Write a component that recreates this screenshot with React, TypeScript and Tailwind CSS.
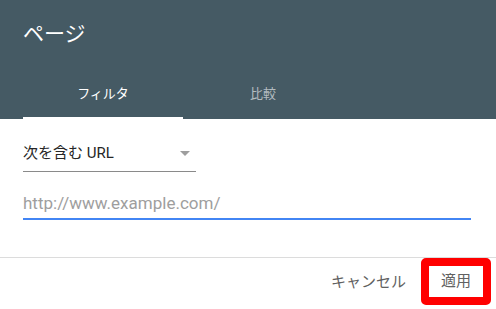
import React from "react";

export default function App() {
  const font = { fontFamily: 'Roboto, "Noto Sans CJK JP", sans-serif' };
  return (
    <div className="w-[496px] h-[309px] bg-white overflow-hidden" style={font}>
      <div className="bg-[#455a64] h-[119px] flex flex-col justify-between">
        <div className="pl-[23px] pt-[22px] text-[21px] leading-[25px] text-white">ページ</div>
        <div className="ml-[23px] flex">
          <div className="w-[160px] h-[48px] flex flex-col">
            <div className="flex-1 flex items-center justify-center text-[13px] text-white">フィルタ</div>
            <div className="h-[2px] bg-white" />
          </div>
          <div className="w-[160px] h-[48px] flex flex-col">
            <div className="flex-1 flex items-center justify-center text-[13px] text-white/60">比較</div>
            <div className="h-[2px]" />
          </div>
        </div>
      </div>
      <div className="pl-[23px]">
        <div className="mt-[16px] w-[173px] h-[37px] border-b border-[#8a8a8a] flex items-center justify-between pr-[6px]">
          <span className="text-[15px] text-[#262626]">次を含む URL</span>
          <svg width="10" height="5" viewBox="0 0 10 5" className="mt-[1px]">
            <path d="M0 0 L10 0 L5 5 Z" fill="#9e9e9e" />
          </svg>
        </div>
        <div className="mt-[18px] w-[448px] h-[30px] border-b-2 border-[#4285f4] flex items-center">
          <input
            className="w-full outline-none text-[17px] text-[#212121] placeholder:text-[#9e9e9e] bg-transparent"
            style={font}
            placeholder="http://www.example.com/"
          />
        </div>
      </div>
      <div className="mt-[37px] border-t border-[#dcdcdc] flex justify-end items-center pr-[5px]">
        <button className="text-[15px] text-[#616161] mr-[15px] mt-[2px]" style={font}>キャンセル</button>
        <button
          className="w-[70px] h-[47px] border-[8px] border-[#ff0000] rounded-[5px] flex items-center justify-center text-[15px] text-[#616161]"
          style={font}
        >
          適用
        </button>
      </div>
    </div>
  );
}
